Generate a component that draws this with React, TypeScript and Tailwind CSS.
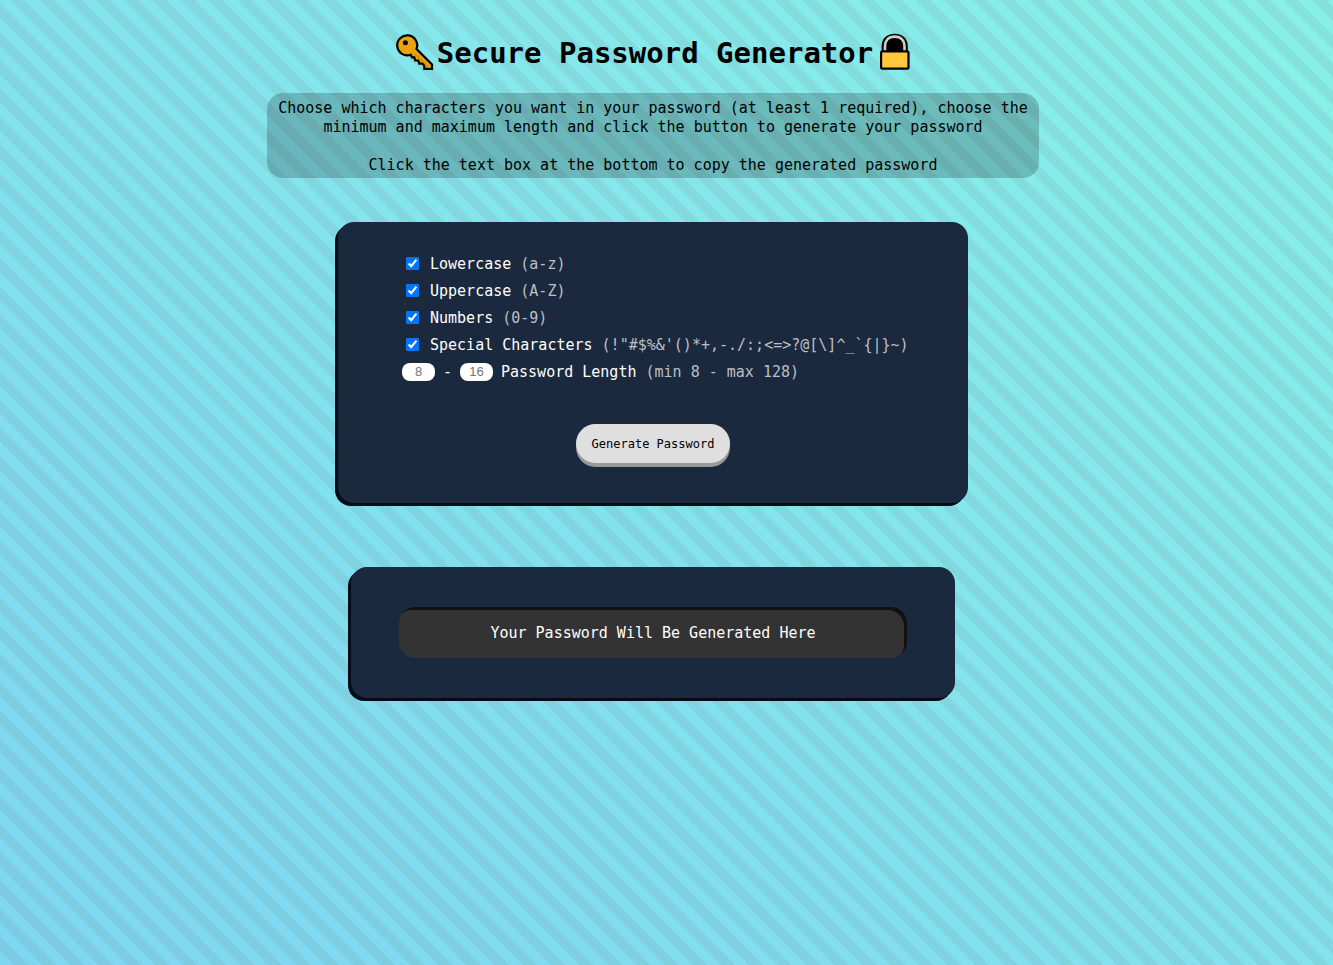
import { useState } from "react";

const CHARACTER_SETS = [
  { id: "lowercase", label: "Lowercase", hint: "(a-z)" },
  { id: "uppercase", label: "Uppercase", hint: "(A-Z)" },
  { id: "numbers", label: "Numbers", hint: "(0-9)" },
  { id: "special", label: "Special Characters", hint: "(!\"#$%&'()*+,-./:;<=>?@[\\]^_`{|}~)" },
];

function KeyIcon() {
  return (
    <svg className="h-10 w-10 shrink-0" viewBox="0 0 40 40" aria-hidden="true">
      <path
        d="M15.700 22.700l1.300 2.600h2.300l.9 3.200h3l1.200 3.200h3.300l1.600 2.300v2.900H37v-4.400L21.500 17A10 10 0 1 0 15.700 22.700Z"
        fill="#eba30a"
        stroke="#000"
        strokeWidth="2.200"
        strokeLinejoin="miter"
      />
      <path d="M19.500 21.500 34.500 36" stroke="#d08c06" strokeWidth="1.200" fill="none" />
      <circle cx="10.400" cy="10.800" r="2.500" fill="#000" />
    </svg>
  );
}

function LockIcon() {
  return (
    <svg className="h-10 w-9 shrink-0" viewBox="0 0 36 40" aria-hidden="true">
      <path d="M6.600 20V14.500C6.600 6.500 11.600 1.700 19.700 1.700S32.800 6.500 32.800 14.500V20Z" fill="#000" />
      <path d="M10 20v-5.500C10 8 13.800 4.600 19.700 4.600S29.500 8 29.500 14.500V20" fill="none" stroke="#cccccc" strokeWidth="2.600" />
      <rect x="6.100" y="19.300" width="27.400" height="17.400" rx="1.200" fill="#ffc83d" stroke="#000" strokeWidth="2.200" />
    </svg>
  );
}

export default function App() {
  const [min, setMin] = useState("");
  const [max, setMax] = useState("");
  const lengthInput =
    "h-[18px] w-[33px] rounded-lg bg-white text-center font-['Liberation_Sans',sans-serif] text-[13px] leading-4 text-black placeholder:text-[#757575]";

  return (
    <main className="flex min-h-screen flex-col items-center bg-[repeating-linear-gradient(45deg,transparent_0px,transparent_10px,rgba(100,100,100,0.1)_10px,rgba(100,100,100,0.1)_20px),linear-gradient(to_top_right,#7fd6f2,#89f0e8)] pt-8 pr-[27px] font-['DejaVu_Sans_Mono',monospace] text-[15px] leading-[19px] text-black">
      <h1 className="flex h-10 items-center gap-[2px] text-[29px] leading-10 font-bold whitespace-nowrap">
        <KeyIcon />
        <span className="pt-[2px]">Secure Password Generator</span>
        <LockIcon />
      </h1>

      <div className="mt-[21px] max-w-[772px] rounded-2xl bg-black/20 px-2 pt-[6px] pb-[3px] text-center">
        <p>
          Choose which characters you want in your password (at least 1 required), choose the minimum and maximum length
          and click the button to generate your password
        </p>
        <p className="mt-[19px]">Click the text box at the bottom to copy the generated password</p>
      </div>

      <form
        className="mt-11 flex w-full max-w-[630px] flex-col items-center rounded-2xl bg-[#1b293e] px-16 pt-7 pb-10 text-white shadow-[-3px_3px_0_#020c17]"
        onSubmit={(e) => e.preventDefault()}
      >
        <div className="flex w-full flex-col whitespace-nowrap">
          {CHARACTER_SETS.map((set) => (
            <label key={set.id} htmlFor={set.id} className="flex h-[27px] items-center">
              <input id={set.id} type="checkbox" defaultChecked className="mr-[11px] ml-1 h-[13px] w-[13px]" />
              <span className="pt-[2px]">
                {set.label} <span className="text-[#bbbfc5]">{set.hint}</span>
              </span>
            </label>
          ))}
          <div className="flex h-[27px] items-center">
            <input aria-label="Minimum length" className={lengthInput} placeholder="8" value={min} onChange={(e) => setMin(e.target.value)} />
            <span className="w-[25px] pt-[2px] text-center">-</span>
            <input id="max-length" className={lengthInput} placeholder="16" value={max} onChange={(e) => setMax(e.target.value)} />
            <label htmlFor="max-length" className="ml-2 pt-[2px]">
              Password Length <span className="text-[#bbbfc5]">(min 8 - max 128)</span>
            </label>
          </div>
        </div>
        <button
          type="submit"
          className="mt-[39px] h-[39px] rounded-[20px] bg-[#dfdfdf] px-4 pt-[2px] text-[12px] text-black shadow-[0_4px_0_#999]"
        >
          Generate Password
        </button>
      </form>

      <section className="mt-16 w-full max-w-[604px] rounded-2xl bg-[#1b293e] px-12 py-10 shadow-[-3px_3px_0_#020c17]">
        <button
          type="button"
          className="h-[51px] w-full rounded-2xl bg-[#333] pt-[2px] text-center text-white shadow-[inset_-3px_3px_0_#111]"
        >
          Your Password Will Be Generated Here
        </button>
      </section>
    </main>
  );
}
